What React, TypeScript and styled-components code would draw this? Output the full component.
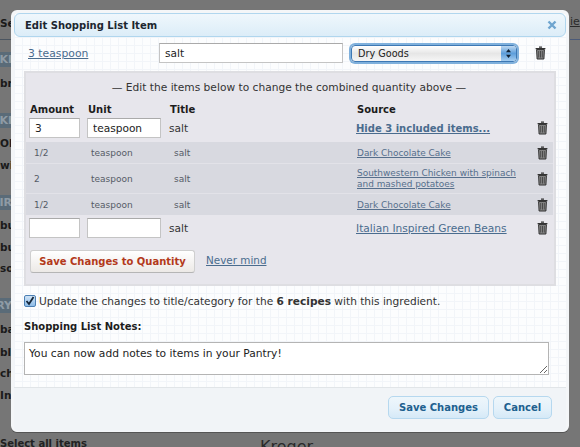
import React from "react";
import styled, { createGlobalStyle } from "styled-components";

const Global = createGlobalStyle`
  html, body { margin: 0; padding: 0; width: 580px; height: 447px; overflow: hidden; background: #767676; }
  * { box-sizing: border-box; }
  body { font-family: "DejaVu Sans", "Liberation Sans", sans-serif; color: #222; }
`;

const Backdrop = styled.div`
  position: relative; width: 580px; height: 447px; overflow: hidden; background: #767676;
  color: #1c1c1c; font-size: 11px;
`;
const BehindColumn = styled.div`
  display: flex; flex-direction: column; padding-top: 16px; width: 12px; overflow: hidden;
`;
const BehindItem = styled.div<{ $top: number }>`
  margin-top: ${(p) => p.$top}px; height: 14px; line-height: 14px; white-space: nowrap; color: #1a1a1a; font-weight: 700; font-size: 10.5px;
`;
const BehindRule = styled.div`
  margin-top: 9px; height: 1px; background: #4b5560;
`;
const BehindTag = styled.div<{ $top: number }>`
  margin-top: ${(p) => p.$top}px; height: 15px; width: 12px; background: #5a6b78; color: #8f9ba5;
  font-weight: 700; line-height: 15px; overflow: hidden; white-space: nowrap; direction: rtl;
`;
const BehindFoot = styled.div`
  position: absolute; left: 0; right: 0; top: 438px; display: flex; font-size: 10px; font-weight: 700; color: #222;
`;
const BehindKroger = styled.span`
  position: absolute; left: 260px; top: -1px; font-size: 16px; font-weight: 400; color: #2a2a2a;
`;
const BehindRight = styled.div`
  position: absolute; left: 570px; top: 15px; width: 10px; height: 25px; border-bottom: 1px solid #4b5a78;
  font-size: 11px; overflow: hidden; color: #2a2a2a; text-decoration: underline;
`;

const Dialog = styled.div`
  position: absolute; left: 11px; top: 10px; width: 558px; height: 422px; border-radius: 6px;
  border: 3px solid #f4f6f8; border-bottom-width: 1px; display: flex; flex-direction: column;
  box-shadow: 0 1px 0 #555;
  background-color: #fcfdfe;
  background-image: linear-gradient(#f2f5f9 1px, transparent 1px), linear-gradient(90deg, #f2f5f9 1px, transparent 1px);
  background-size: 8px 8px;
`;
const TitleBar = styled.div`
  height: 24px; flex: none; border: 1px solid #b0d6ee; border-radius: 6px;
  background: linear-gradient(#eff7fc, #dcedf8); display: flex; align-items: center; justify-content: space-between;
  padding: 0 8px 0 10px; font-weight: 700; font-size: 10px; color: #1c2630;
`;
const Close = styled.span`
  display: flex; color: #6fa5cf;
`;
const Body = styled.div`
  flex: 1; padding: 6px 0 0 10px; display: flex; flex-direction: column;
`;
const TopRow = styled.div`
  display: grid; grid-template-columns: 135px 184px 166px 1fr; align-items: center; height: 20px;
`;
const Link = styled.a<{ $size?: number; $bold?: boolean }>`
  color: #4a6c8e; text-decoration: underline; font-size: ${(p) => p.$size ?? 10.7}px;
  font-weight: ${(p) => (p.$bold ? 700 : 400)};
`;
const QuantityLink = styled(Link)`
  padding-left: 4px;
`;
const TextField = styled.input`
  height: 20px; width: 100%; border: 1px solid #c4c4c4; border-top-color: #aaa; background: #fff;
  font: 10.6px "DejaVu Sans", sans-serif; color: #222; padding: 0 5px; outline: none; border-radius: 0;
`;
const SelectBox = styled.div`
  margin-left: 8px; width: 166px; height: 17px; border-radius: 4px; border: 1px solid #3d78b4;
  box-shadow: 0 0 0 2px #7fb0dc; background: linear-gradient(#fff, #e6e6e6 50%, #f6f6f6);
  display: flex; justify-content: space-between; align-items: center; font-size: 9.7px; padding-left: 6px; color: #222; overflow: hidden;
`;
const Stepper = styled.span`
  width: 15px; height: 100%; display: flex; align-items: center; justify-content: center;
  background: linear-gradient(#bcd7f0, #5d9edb 50%, #a5cdf0);
`;
const TrashSlot = styled.span<{ $left?: number }>`
  display: flex; justify-content: center; margin-left: ${(p) => p.$left ?? 0}px;
`;
const Panel = styled.div`
  margin-top: 8px; width: 532px; height: 215px; flex: none; background: #e7e6ec; border: 2px solid #dedee2;
  padding-top: 8px; display: flex; flex-direction: column;
`;
const PanelNote = styled.div`
  text-align: center; font-size: 10.65px; color: #333; height: 14px; line-height: 14px; padding-right: 2px;
`;
const Cols = "58px 82px 187px 167px 1fr";
const HeadRow = styled.div`
  display: grid; grid-template-columns: ${Cols}; padding-left: 4px; margin-top: 8px; height: 14px; line-height: 14px;
  font-weight: 700; font-size: 10px; color: #1c1c1c;
`;
const EditRow = styled.div<{ $mt: number }>`
  display: grid; grid-template-columns: ${Cols}; padding-left: 3px; margin-top: ${(p) => p.$mt}px; height: 20px; align-items: center;
  font-size: 10.6px; color: #333;
`;
const AmountField = styled(TextField)`width: 51px;`;
const UnitField = styled(TextField)`width: 74px;`;
const SubRows = styled.div`
  margin-top: 4px; display: flex; flex-direction: column; background: #d8d9e0; margin-right: 1px;
`;
const SubRow = styled.div<{ $h: number }>`
  display: grid; grid-template-columns: 57px 83px 183px 170px 1fr; height: ${(p) => p.$h}px; align-items: center; padding-left: 8px;
  font-size: 9px; color: #555b66; border-bottom: 1px solid #e2e2e8;
  &:last-child { border-bottom: 0; }
`;
const SubLink = styled(Link)`
  font-size: 8.95px; line-height: 11px; color: #566f8c; display: block; width: 170px; padding-top: 1px;
`;
const Actions = styled.div`
  display: flex; align-items: center; padding-left: 4px; margin-top: 12px;
`;
const WarmButton = styled.button`
  width: 165px; height: 23px; border: 1px solid #cfcfcf; border-bottom-color: #b5b5b5; border-radius: 3px;
  background: linear-gradient(#fff, #ece9e6); color: #b3391a; font: 700 10px "DejaVu Sans", sans-serif; padding: 0;
`;
const NeverMind = styled(Link)`
  margin-left: 11px; margin-top: -3px; font-size: 10.4px;
`;
const CheckRow = styled.div`
  display: flex; align-items: center; margin-top: 8px; height: 14px; font-size: 10.6px; color: #333; white-space: nowrap;
`;
const CheckBox = styled.span`
  width: 12px; height: 12px; border: 1px solid #4b7fb3; border-radius: 2px; background: linear-gradient(#cfe3f6, #8dbce8);
  display: flex; align-items: center; justify-content: center; margin-right: 3px; flex: none;
`;
const NotesLabel = styled.div`
  margin-top: 12px; font-size: 10px; font-weight: 700; color: #1c1c1c; height: 14px; line-height: 14px;
`;
const Notes = styled.textarea`
  margin-top: 8px; width: 525px; height: 33px; display: block; border: 1px solid #b4b4b4; background: #fff; resize: both;
  font: 10.7px "DejaVu Sans", sans-serif; color: #222; padding: 4px; outline: none; border-radius: 0;
`;
const Footer = styled.div`
  height: 44px; flex: none; background: #f1f4f7; border-top: 1px solid #e1e5e8; border-radius: 0 0 4px 4px;
  display: flex; justify-content: flex-end; align-items: flex-start; gap: 4px; padding: 8px 14px 0 0;
`;
const BlueButton = styled.button<{ $w: number }>`
  width: ${(p) => p.$w}px; height: 23px; border: 1px solid #b6d8ef; border-radius: 5px;
  background: linear-gradient(#eef6fb, #e4f1fa 55%, #d5e9f7); color: #20608f;
  font: 700 10px "DejaVu Sans", sans-serif; padding: 0;
`;

const Trash = () => (
  <svg width="11" height="14" viewBox="0 0 11 14">
    <path d="M4 1.2h3M0.6 2.6h9.8" stroke="#333" strokeWidth="1.2" fill="none" />
    <path d="M1.6 3.6h7.8l-.5 9.4H2.1z" fill="#8b8b8b" stroke="#2e2e2e" strokeWidth="1" />
    <path d="M3.7 5v6.6M5.5 5v6.6M7.3 5v6.6" stroke="#3a3a3a" strokeWidth=".8" />
  </svg>
);

export default function App() {
  return (
    <Backdrop>
      <Global />
      <BehindColumn>
        <BehindItem $top={0}>Se</BehindItem>
        <BehindRule />
        <BehindTag $top={12}>KI</BehindTag>
        <BehindItem $top={9}>br</BehindItem>
        <BehindTag $top={23}>KI</BehindTag>
        <BehindItem $top={8}>Ol</BehindItem>
        <BehindItem $top={8}>wi</BehindItem>
        <BehindTag $top={23}>AIR</BehindTag>
        <BehindItem $top={8}>bu</BehindItem>
        <BehindItem $top={8}>bu</BehindItem>
        <BehindItem $top={7}>so</BehindItem>
        <BehindTag $top={23}>RY</BehindTag>
        <BehindItem $top={9}>ba</BehindItem>
        <BehindItem $top={9}>bl</BehindItem>
        <BehindItem $top={7}>ch</BehindItem>
        <BehindItem $top={8}>In</BehindItem>
      </BehindColumn>
      <BehindFoot>
        Select all items
        <BehindKroger>Kroger</BehindKroger>
      </BehindFoot>
      <BehindRight>ie</BehindRight>
      <Dialog>
        <TitleBar>
          Edit Shopping List Item
          <Close>
            <svg width="10" height="10" viewBox="0 0 10 10">
              <path d="M1.5 1.5l7 7M8.5 1.5l-7 7" stroke="currentColor" strokeWidth="2.4" />
            </svg>
          </Close>
        </TitleBar>
        <Body>
          <TopRow>
            <QuantityLink $size={10.8}>3 teaspoon</QuantityLink>
            <TextField defaultValue="salt" />
            <SelectBox>
              Dry Goods
              <Stepper>
                <svg width="7" height="11" viewBox="0 0 7 11">
                  <path d="M3.5 1L6 4.3H1zM3.5 10L1 6.7h5z" fill="#123" />
                </svg>
              </Stepper>
            </SelectBox>
            <TrashSlot $left={5}><Trash /></TrashSlot>
          </TopRow>
          <Panel>
            <PanelNote>— Edit the items below to change the combined quantity above —</PanelNote>
            <HeadRow>
              <span>Amount</span><span>Unit</span><span>Title</span><span>Source</span>
            </HeadRow>
            <EditRow $mt={1}>
              <AmountField defaultValue="3" />
              <UnitField defaultValue="teaspoon" />
              <span>salt</span>
              <Link $bold $size={10}>Hide 3 included items...</Link>
              <TrashSlot $left={8}><Trash /></TrashSlot>
            </EditRow>
            <SubRows>
              <SubRow $h={22}>
                <span>1/2</span><span>teaspoon</span><span>salt</span>
                <SubLink>Dark Chocolate Cake</SubLink>
                <TrashSlot $left={4}><Trash /></TrashSlot>
              </SubRow>
              <SubRow $h={30}>
                <span>2</span><span>teaspoon</span><span>salt</span>
                <SubLink>Southwestern Chicken with spinach and mashed potatoes</SubLink>
                <TrashSlot $left={4}><Trash /></TrashSlot>
              </SubRow>
              <SubRow $h={21}>
                <span>1/2</span><span>teaspoon</span><span>salt</span>
                <SubLink>Dark Chocolate Cake</SubLink>
                <TrashSlot $left={4}><Trash /></TrashSlot>
              </SubRow>
            </SubRows>
            <EditRow $mt={3}>
              <AmountField />
              <UnitField />
              <span>salt</span>
              <Link $size={10.65}>Italian Inspired Green Beans</Link>
              <TrashSlot $left={8}><Trash /></TrashSlot>
            </EditRow>
            <Actions>
              <WarmButton>Save Changes to Quantity</WarmButton>
              <NeverMind>Never mind</NeverMind>
            </Actions>
          </Panel>
          <CheckRow>
            <CheckBox>
              <svg width="10" height="10" viewBox="0 0 10 10">
                <path d="M1.5 5l2.5 3L8.5 1" stroke="#14263a" strokeWidth="1.8" fill="none" />
              </svg>
            </CheckBox>
            <span>Update the changes to title/category for the <b>6 recipes</b> with this ingredient.</span>
          </CheckRow>
          <NotesLabel>Shopping List Notes:</NotesLabel>
          <Notes defaultValue="You can now add notes to items in your Pantry!" />
        </Body>
        <Footer>
          <BlueButton $w={101}>Save Changes</BlueButton>
          <BlueButton $w={59}>Cancel</BlueButton>
        </Footer>
      </Dialog>
    </Backdrop>
  );
}
